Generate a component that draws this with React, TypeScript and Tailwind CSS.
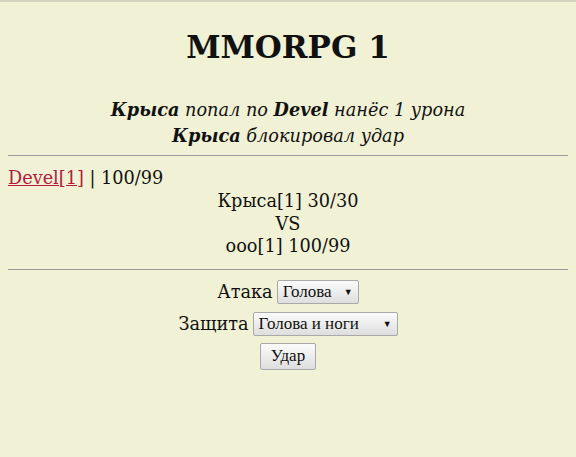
import React from "react";

const serif = { fontFamily: '"DejaVu Serif", "Liberation Serif", serif' };

function FakeSelect({ label, w }: { label: string; w: string }) {
  return (
    <span
      className={`inline-flex items-center justify-between h-[24px] ${w} px-[5px] border border-[#a9a9a9] rounded-[2px] bg-gradient-to-b from-[#fbfbfb] to-[#dedede] text-[17px] text-[#111] align-middle`}
      style={{ fontFamily: '"Liberation Serif", serif' }}
    >
      <span>{label}</span>
      <span className="text-[9px] ml-[6px]">▼</span>
    </span>
  );
}

export default function App() {
  return (
    <div className="min-h-[457px] bg-[#f1f1d5] border-t-2 border-[#d3d3c3] text-[#111]" style={serif}>
      <div className="px-[8px]">
        <h1 className="text-center text-[31px] font-bold leading-[40px] pt-[25px]">MMORPG 1</h1>
        <div className="text-center italic text-[17.7px] leading-[25px] mt-[30px]">
          <div>
            <b>Крыса</b> попал по <b>Devel</b> нанёс 1 урона
          </div>
          <div>
            <b>Крыса</b> блокировал удар
          </div>
        </div>
        <div className="h-px bg-[#999] mt-[6px]" />
        <div className="text-[17.7px] leading-[23px] mt-[11px]">
          <a href="#" className="text-[#b11a3c] underline">Devel[1]</a> | 100/99
        </div>
        <div className="text-center text-[17.7px] leading-[22.5px]">
          <div>Крыса[1] 30/30</div>
          <div>VS</div>
          <div>ooo[1] 100/99</div>
        </div>
        <div className="h-px bg-[#999] mt-[11px]" />
        <div className="flex flex-col items-center text-[17.7px] leading-[24px] mt-[10px] gap-[8px]">
          <div className="flex items-center gap-[4px]">
            <span>Атака</span>
            <FakeSelect label="Голова" w="w-[82px]" />
          </div>
          <div className="flex items-center gap-[4px]">
            <span>Защита</span>
            <FakeSelect label="Голова и ноги" w="w-[145px]" />
          </div>
          <button
            className="h-[27px] w-[56px] -mt-[1px] border border-[#a9a9a9] rounded-[2px] bg-gradient-to-b from-[#fbfbfb] to-[#dedede] text-[17px] text-[#111]"
            style={{ fontFamily: '"Liberation Serif", serif' }}
          >
            Удар
          </button>
        </div>
      </div>
    </div>
  );
}
